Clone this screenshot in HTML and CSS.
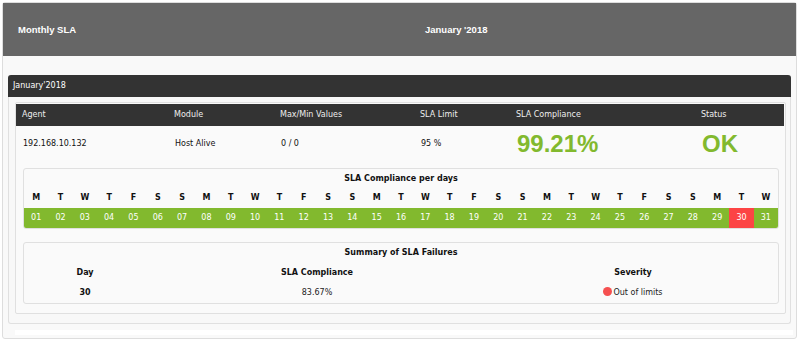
FILE: index.html
```html
<!DOCTYPE html>
<html lang="en">

<head>
    <meta charset="UTF-8">
    <meta name="viewport" content="width=device-width, initial-scale=1.0">
    <title>Monthly SLA</title>
    <link rel="stylesheet" href="styles.css">
</head>

<body>
    <div class="report">
        <div class="report-head">
            <div>Monthly SLA</div>
            <div>January '2018</div>
        </div>

        <div class="section">
            <div class="section-bar">January'2018</div>

            <div class="card">
                <div class="sla-table">
                    <div class="th">Agent</div>
                    <div class="th">Module</div>
                    <div class="th">Max/Min Values</div>
                    <div class="th">SLA Limit</div>
                    <div class="th">SLA Compliance</div>
                    <div class="th">Status</div>

                    <div class="td">192.168.10.132</div>
                    <div class="td">Host Alive</div>
                    <div class="td">0 / 0</div>
                    <div class="td">95 %</div>
                    <div class="td big">99.21%</div>
                    <div class="td big">OK</div>
                </div>

                <div class="box">
                    <div class="box-title">SLA Compliance per days</div>
                    <div id="days" class="days"></div>
                </div>

                <div class="box">
                    <div class="box-title">Summary of SLA Failures</div>
                    <div class="fail-table">
                        <div class="fh">Day</div>
                        <div class="fh">SLA Compliance</div>
                        <div class="fh">Severity</div>
                        <div class="fd bold">30</div>
                        <div class="fd">83.67%</div>
                        <div class="fd"><span class="dot"></span>Out of limits</div>
                    </div>
                </div>
            </div>
        </div>

        <div class="strip"></div>
    </div>

    <script>
        const letters = ['M', 'T', 'W', 'T', 'F', 'S', 'S'];
        const failed = [30];

        let days = document.getElementById('days');
        let html = '';
        for (let i = 0; i < 31; i++) {
            html += `<div class="wd">${letters[i % 7]}</div>`;
        }
        for (let i = 1; i <= 31; i++) {
            let n = i < 10 ? '0' + i : '' + i;
            html += `<div class="day${failed.includes(i) ? ' bad' : ''}">${n}</div>`;
        }
        days.innerHTML = html;
    </script>
</body>

</html>
```

FILE: styles.css
```css
* {
    box-sizing: border-box;
}

:root {
    --color-head: #666666;
    --color-bar: #333333;
    --color-ok: #82b92e;
    --color-bad: #fc4444;
    --color-line: #e0e0e0;
}

body {
    margin: 2px;
    background-color: #ffffff;
    font-family: "DejaVu Sans", Verdana, sans-serif;
    font-size: 8px;
    color: #111;
}

.report {
    width: 795px;
    background-color: #f9f9f9;
    border: 1px solid #dddddd;
    border-radius: 3px;
    padding-bottom: 3px;
}

.report-head {
    display: grid;
    grid-template-columns: 407px 1fr;
    align-items: center;
    height: 53px;
    padding-left: 15px;
    background-color: var(--color-head);
    color: #fff;
    font-family: "Liberation Sans", Arial, sans-serif;
    font-weight: bold;
    font-size: 9.5px;
}

.section {
    margin: 19px 5px 0 5px;
    border: 1px solid var(--color-line);
    border-top: none;
    border-radius: 3px;
    padding: 0 4px 9px 6px;
    background-color: #f8f8f8;
}

.section-bar {
    height: 22px;
    line-height: 22px;
    margin: 0 -5px 5px -7px;
    padding-left: 5px;
    background-color: var(--color-bar);
    color: #fff;
    border-radius: 3px 3px 0 0;
}

.card {
    background-color: #fafafa;
    border: 1px solid var(--color-line);
    border-radius: 2px;
    padding: 1px 0 9px 0;
}

.sla-table {
    display: grid;
    grid-template-columns: 152px 106px 140px 96px 185px 89px;
}

.th {
    height: 22px;
    line-height: 22px;
    padding-left: 6px;
    background-color: var(--color-bar);
    color: #eeeeee;
}

.td {
    height: 36px;
    line-height: 36px;
    padding-left: 7px;
}

.big {
    font-family: "Liberation Sans", Arial, sans-serif;
    font-weight: bold;
    font-size: 24px;
    color: var(--color-ok);
}

.box {
    margin: 6px 6px 0 7px;
    background-color: #fafafa;
    border: 1px solid var(--color-line);
    border-radius: 3px;
    overflow: hidden;
}

.box + .box {
    margin-top: 13px;
}

.box-title {
    height: 19px;
    line-height: 19px;
    text-align: center;
    font-weight: bold;
}

.days {
    display: grid;
    grid-template-columns: repeat(31, 1fr);
}

.wd {
    height: 20px;
    line-height: 20px;
    text-align: center;
    font-weight: bold;
}

.day {
    height: 20px;
    line-height: 20px;
    text-align: center;
    background-color: var(--color-ok);
    color: #fff;
}

.day.bad {
    background-color: var(--color-bad);
}

.box-title + .fail-table {
    margin-top: 1px;
}

.fail-table {
    display: grid;
    grid-template-columns: 122px 342px 1fr;
}

.fh {
    height: 20px;
    line-height: 20px;
    text-align: center;
    font-weight: bold;
}

.fd {
    height: 20px;
    line-height: 20px;
    text-align: center;
    color: #222;
}

.bold {
    font-weight: bold;
    color: #111;
}

.dot {
    display: inline-block;
    width: 9px;
    height: 9px;
    margin-right: 1px;
    vertical-align: -1px;
    border-radius: 50%;
    background-color: #f55050;
}

.strip {
    height: 5px;
    margin: 6px 3px 0 12px;
    background-color: #ffffff;
}
```
